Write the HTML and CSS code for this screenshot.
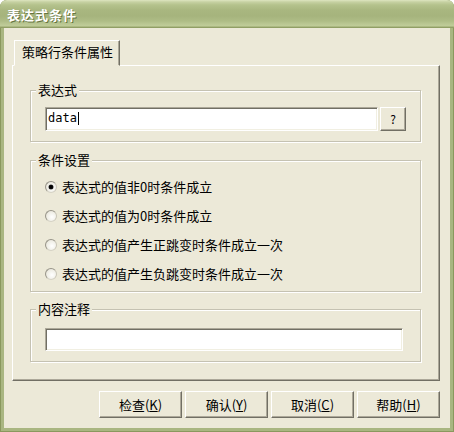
FILE: index.html
```html
<!DOCTYPE html>
<html lang="zh-CN">
<head>
<meta charset="utf-8">
<title>表达式条件</title>
<link rel="stylesheet" href="styles.css">
</head>
<body>
<div class="window">
  <div class="titlebar"><span class="title">表达式条件</span></div>
  <div class="client">
    <div class="tabs"><div class="tab">策略行条件属性</div></div>
    <div class="panel">
      <div class="group g1">
        <div class="group-title">表达式</div>
        <div class="expr-row">
          <div class="textbox expr"><span class="mono">data</span><span class="caret"></span></div>
          <button class="btn qbtn">?</button>
        </div>
      </div>
      <div class="group g2">
        <div class="group-title">条件设置</div>
        <div class="radios">
          <div class="radio"><span class="dot checked"></span><span>表达式的值非0时条件成立</span></div>
          <div class="radio"><span class="dot"></span><span>表达式的值为0时条件成立</span></div>
          <div class="radio"><span class="dot"></span><span>表达式的值产生正跳变时条件成立一次</span></div>
          <div class="radio"><span class="dot"></span><span>表达式的值产生负跳变时条件成立一次</span></div>
        </div>
      </div>
      <div class="group g3">
        <div class="group-title">内容注释</div>
        <div class="textbox note"></div>
      </div>
    </div>
    <div class="buttons">
      <button class="btn">检查(<u>K</u>)</button>
      <button class="btn">确认(<u>Y</u>)</button>
      <button class="btn">取消(<u>C</u>)</button>
      <button class="btn">帮助(<u>H</u>)</button>
    </div>
  </div>
</div>
</body>
</html>
```

FILE: styles.css
```css
* { box-sizing: border-box; }
html, body { margin: 0; }
body {
  background: #ffffff;
  font-family: "Noto Sans CJK SC", "Noto Sans", sans-serif;
  font-size: 13px;
  color: #000;
}
.window {
  width: 454px;
  height: 432px;
  display: flex;
  flex-direction: column;
  background: #A9B681;
  border-radius: 7px 7px 0 0;
  overflow: hidden;
  box-shadow: inset 0 0 0 1px #8A985E;
}
.titlebar {
  height: 28px;
  flex: none;
  display: flex;
  align-items: center;
  padding: 2px 0 0 7px;
  background: linear-gradient(to bottom, #DDE5C0 0px, #C6D1A2 2px, #B4C28C 5px, #A9B780 10px, #A6B47D 16px, #AEBC86 21px, #BAC793 24px, #C0CC99 26px, #97A56C 27px, #8A985E 28px);
}
.title {
  color: #fff;
  font-weight: bold;
  font-size: 13px;
  letter-spacing: 1px;
  line-height: 16px;
  text-shadow: 1px 1px 0 #66743F;
}
.client {
  flex: 1;
  margin: 0 4px 4px;
  background: #ECE9D8;
  display: flex;
  flex-direction: column;
  padding: 12px 10px 10px 8px;
}
.tabs {
  height: 25px;
  flex: none;
  display: flex;
  padding-left: 2px;
  position: relative;
  z-index: 1;
}
.tab {
  height: 26px;
  padding: 0 6px 0 7px;
  border: 1px solid;
  border-color: #fff #716F64 transparent #fff;
  background: #ECE9D8;
  line-height: 22px;
  box-shadow: inset -1px 0 0 #ACA899;
}
.panel {
  height: 316px;
  flex: none;
  border: 1px solid;
  border-color: #fff #716F64 #716F64 #fff;
  box-shadow: inset -1px -1px 0 #ACA899;
  padding: 24px 18px 0 17px;
}
.group {
  border: 1px solid #C5C2B2;
  box-shadow: inset 1px 1px 0 #fff, 1px 1px 0 #fff;
}
.group-title {
  width: fit-content;
  margin: -9px 0 0 -9px;
  padding: 0 2px;
  background: #ECE9D8;
  line-height: 16px;
}
.g1 { padding: 0 14px 10px; }
.g2 { margin-top: 18px; padding: 0 14px 3px; }
.g3 { margin-top: 17px; padding: 0 17px 10px 14px; }
.expr-row {
  display: flex;
  gap: 2px;
  margin-top: 9px;
  height: 24px;
}
.textbox {
  background: #fff;
  border: 1px solid;
  border-color: #ACA899 #fff #fff #ACA899;
  box-shadow: inset 1px 1px 0 #716F64, inset -1px -1px 0 #F1EFE2;
}
.expr {
  width: 333px;
  height: 24px;
  padding: 0 0 0 2px;
  display: flex;
  align-items: center;
}
.mono {
  font-family: "DejaVu Sans Mono", "Liberation Mono", monospace;
  font-size: 12px;
  margin-top: -2px;
}
.caret {
  display: inline-block;
  width: 1px;
  height: 13px;
  background: #000;
  margin: -2px 0 0 1px;
}
.note {
  margin-top: 11px;
  width: 358px;
  height: 23px;
}
.radios { margin-top: 4px; }
.radio {
  display: flex;
  align-items: center;
  height: 29px;
  gap: 5px;
}
.dot {
  width: 12px;
  height: 12px;
  flex: none;
  border-radius: 50%;
  border: 1px solid;
  border-color: #98958A #C9C6B8 #D6D3C6 #98958A;
  background: radial-gradient(circle at 60% 60%, #ffffff 0%, #F0EFE7 55%, #DAD7C9 100%);
  display: flex;
  align-items: center;
  justify-content: center;
}
.dot.checked::after {
  content: "";
  width: 4px;
  height: 4px;
  border-radius: 50%;
  background: #000;
  box-shadow: 0 0 0 0.5px #333;
}
.buttons {
  display: flex;
  justify-content: flex-end;
  gap: 3px;
  margin-top: 10px;
  height: 27px;
}
.btn {
  width: 83px;
  height: 27px;
  font: inherit;
  color: #000;
  background: #ECE9D8;
  border: 1px solid;
  border-color: #fff #716F64 #716F64 #fff;
  box-shadow: inset -1px -1px 0 #ACA899;
  padding: 0;
  margin: 0;
  line-height: 24px;
}
.qbtn {
  width: 26px;
  height: 24px;
  font-size: 12px;
  line-height: 20px;
}
```
